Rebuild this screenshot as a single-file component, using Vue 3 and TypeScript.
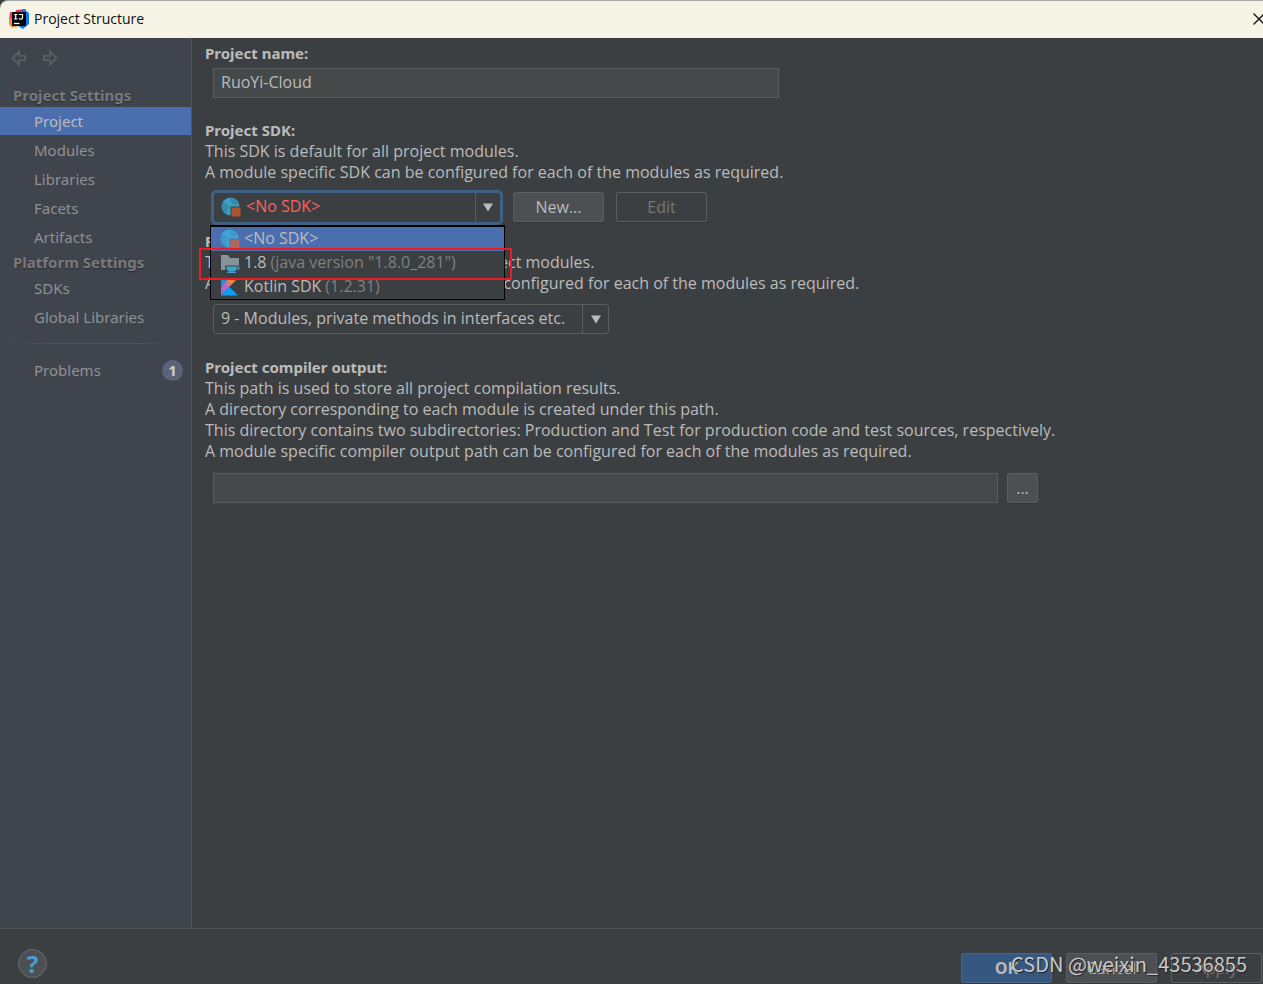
<script setup lang="ts">
import { ref } from 'vue'

interface SdkOption {
  id: string
  name: string
  version: string
  icon: 'globe' | 'folder' | 'kotlin'
}

const projectItems: string[] = ['Project', 'Modules', 'Libraries', 'Facets', 'Artifacts']
const platformItems: string[] = ['SDKs', 'Global Libraries']
const activeItem = ref('Project')

const projectName = ref('RuoYi-Cloud')
const outputPath = ref('')
const sdk = ref('none')
const level = ref('9')
const highlighted = ref('none')

const sdkOptions: SdkOption[] = [
  { id: 'none', name: '<No SDK>', version: '', icon: 'globe' },
  { id: '1.8', name: '1.8', version: '(java version "1.8.0_281")', icon: 'folder' },
  { id: 'kotlin', name: 'Kotlin SDK', version: '(1.2.31)', icon: 'kotlin' },
]
</script>

<template>
  <div class="window">
    <header class="titlebar">
      <svg class="app-logo" viewBox="0 0 20 20" aria-hidden="true">
        <path d="M1 3 6 5 7 1 17 0 14 9 5 11Z" fill="#e8305f" />
        <path d="M1 3 4 4 4 12 0 10Z" fill="#f0465a" />
        <path d="M0 10 4 9 6 17 3 19 0 15Z" fill="#fb8a2e" />
        <path d="M12 2 15 0 20 4 20 15 14 20 9 17Z" fill="#0f7df2" />
        <path d="M3 16 7 15 8 19 4 18Z" fill="#f7a23b" />
        <rect x="3" y="3" width="14" height="14" fill="#050505" />
        <path d="M5 5.5h3.4M5 10h3.4M6.7 5.500v4.500M10 5.500h3.500v3.300q0 1.300-1.600 1.300-1.200 0-1.900-.7" fill="none" stroke="#fff" stroke-width="1.200" />
        <path d="M5 14.500h5.500" stroke="#fff" stroke-width="1.300" />
      </svg>
      <h1 class="title">Project Structure</h1>
      <button class="close" type="button" aria-label="Close">
        <svg viewBox="0 0 12 12" aria-hidden="true"><path d="M.5.5l11 11M11.500.5l-11 11" stroke="#111" stroke-width="1.300" /></svg>
      </button>
    </header>

    <div class="body">
      <nav class="sidebar" aria-label="Settings">
        <div class="history">
          <button type="button" aria-label="Back" disabled>
            <svg viewBox="0 0 18 18" aria-hidden="true"><path d="M9 2.500 2.500 9 9 15.500V11.200h6V6.800H9Z" fill="none" stroke="#5d5f62" stroke-width="1.800" /></svg>
          </button>
          <button type="button" aria-label="Forward" disabled>
            <svg viewBox="0 0 18 18" aria-hidden="true"><path d="M9 2.500 15.500 9 9 15.500V11.200H3V6.800h6Z" fill="none" stroke="#5d5f62" stroke-width="1.800" /></svg>
          </button>
        </div>
        <h2 class="group">Project Settings</h2>
        <ul class="items">
          <li v-for="item in projectItems" :key="item">
            <button type="button" class="item" :class="{ active: item === activeItem }" @click="activeItem = item">{{ item }}</button>
          </li>
        </ul>
        <h2 class="group">Platform Settings</h2>
        <ul class="items">
          <li v-for="item in platformItems" :key="item">
            <button type="button" class="item" :class="{ active: item === activeItem }" @click="activeItem = item">{{ item }}</button>
          </li>
        </ul>
        <hr class="divider" />
        <button type="button" class="item problems" @click="activeItem = 'Problems'">
          <span>Problems</span><span class="count">1</span>
        </button>
      </nav>

      <main class="content">
        <section class="block">
          <label class="heading" for="project-name">Project name:</label>
          <input id="project-name" v-model="projectName" class="field name-field" type="text" />
        </section>

        <section class="block">
          <label class="heading" for="project-sdk">Project SDK:</label>
          <p>This SDK is default for all project modules.</p>
          <p>A module specific SDK can be configured for each of the modules as required.</p>
          <div class="sdk-row">
            <div class="combo focused">
              <svg class="sdk-icon" viewBox="0 0 20 20" aria-hidden="true">
                <circle cx="9.500" cy="9.500" r="9" fill="#3d9fc4" />
                <path d="M2 5 6 7 8 10 6 13 7 17 3 15 0 10ZM9 1 15 3 17 7 13 8 10 5Z" fill="#2f7f9f" opacity=".6" />
                <rect x="9.500" y="9.500" width="10.500" height="10.500" fill="#3c3f41" />
                <rect x="10.500" y="10.500" width="9" height="9" fill="#a9552f" />
              </svg>
              <select id="project-sdk" v-model="sdk" class="missing">
                <option v-for="o in sdkOptions" :key="o.id" :value="o.id">{{ o.name }}</option>
              </select>
              <span class="arrow"><svg viewBox="0 0 10 9" aria-hidden="true"><path d="M0 .5h10L5 8.500Z" fill="#bbb" /></svg></span>

              <ul class="popup" role="listbox" aria-label="Project SDK">
                <li
                  v-for="o in sdkOptions"
                  :key="o.id"
                  role="option"
                  :aria-selected="o.id === sdk"
                  :class="{ selected: o.id === highlighted, marked: o.id === '1.8' }"
                  @mouseenter="highlighted = o.id"
                  @click="sdk = o.id"
                >
                  <svg v-if="o.icon === 'globe'" class="sdk-icon" viewBox="0 0 20 20" aria-hidden="true">
                    <circle cx="9.500" cy="9.500" r="9" fill="#3ea6d8" />
                    <path d="M2 5 6 7 8 10 6 13 7 17 3 15 0 10ZM9 1 15 3 17 7 13 8 10 5Z" fill="#3d8dc0" opacity=".6" />
                    <rect x="9.500" y="9.500" width="10.500" height="10.500" fill="#4b6eaf" />
                    <rect x="10.500" y="10.500" width="9" height="9" fill="#b0685c" />
                  </svg>
                  <svg v-else-if="o.icon === 'folder'" class="sdk-icon" viewBox="0 0 20 20" aria-hidden="true">
                    <path d="M1 2h7l2 3h9v12H1Z" fill="#87939a" />
                    <path d="M5 12.500H20V20H8Q5 18 5 12.500Z" fill="#3c3f41" />
                    <path d="M6 13.500h13.500v3.300h-3.200q-1 1.700-3.300 1.700h-3q-3.500-.8-4-5Z" fill="#40a4c8" />
                    <path d="M16.500 14.500h2v1.200h-2Z" fill="#3c3f41" />
                    <path d="M7 19.300h9" stroke="#40a4c8" stroke-width="1.400" />
                  </svg>
                  <svg v-else class="sdk-icon" viewBox="0 0 20 20" aria-hidden="true">
                    <defs>
                      <linearGradient id="kt-warm" x1="0" y1="1" x2="1" y2="0">
                        <stop offset="0" stop-color="#7f6df0" />
                        <stop offset=".45" stop-color="#c169bd" />
                        <stop offset=".7" stop-color="#f28a3c" />
                        <stop offset="1" stop-color="#f98b1e" />
                      </linearGradient>
                    </defs>
                    <path d="M1 1h8L1 10Z" fill="#1596e8" />
                    <path d="M9 1h9L1 18.500V10Z" fill="url(#kt-warm)" />
                    <path d="M1 18.500 9.500 10 18 18.500Z" fill="#0ba0f4" />
                  </svg>
                  <span class="sdk-name">{{ o.name }}</span>
                  <span v-if="o.version" class="sdk-version">{{ o.version }}</span>
                </li>
              </ul>
            </div>
            <button class="btn" type="button">New...</button>
            <button class="btn" type="button" disabled>Edit</button>
          </div>
        </section>

        <section class="block level">
          <label class="heading" for="language-level">Project language level:</label>
          <p>This language level is default for all project modules.</p>
          <p>A module specific language level can be configured for each of the modules as required.</p>
          <div class="combo level-combo">
            <select id="language-level" v-model="level">
              <option value="9">9 - Modules, private methods in interfaces etc.</option>
            </select>
            <span class="arrow"><svg viewBox="0 0 10 9" aria-hidden="true"><path d="M0 .5h10L5 8.500Z" fill="#bbb" /></svg></span>
          </div>
        </section>

        <section class="block">
          <label class="heading" for="output-path">Project compiler output:</label>
          <p>This path is used to store all project compilation results.</p>
          <p>A directory corresponding to each module is created under this path.</p>
          <p>This directory contains two subdirectories: Production and Test for production code and test sources, respectively.</p>
          <p>A module specific compiler output path can be configured for each of the modules as required.</p>
          <div class="output-row">
            <input id="output-path" v-model="outputPath" class="field" type="text" />
            <button class="btn browse" type="button" aria-label="Browse">...</button>
          </div>
        </section>
      </main>
    </div>

    <footer class="footer">
      <button class="help" type="button" aria-label="Help">?</button>
      <div class="actions">
        <button class="btn primary" type="button">OK</button>
        <button class="btn" type="button">Cancel</button>
        <button class="btn" type="button" disabled>Apply</button>
      </div>
      <span class="watermark">CSDN @weixin_43536855</span>
    </footer>
  </div>
</template>

<style>
body {
  margin: 0;
  background: #3c3f41;
}
</style>

<style scoped>
.window {
  display: flex;
  flex-direction: column;
  min-height: 100vh;
  box-sizing: border-box;
  overflow: hidden;
  background: #3c3f41;
  color: #bbb;
  font: 16px/21px "Open Sans", "Noto Sans", sans-serif;
}
.window * {
  box-sizing: border-box;
}
button, input, select {
  margin: 0;
  font: inherit;
  color: inherit;
}
p, h1, h2, ul {
  margin: 0;
  padding: 0;
}
ul {
  list-style: none;
}
svg {
  display: block;
}

.titlebar {
  display: flex;
  align-items: center;
  height: 38px;
  padding: 0 0 1px 9px;
  border-top: 1px solid #aaa9a8;
  border-top-left-radius: 8px;
  background: #f5f4e6;
  color: #111;
}
.app-logo {
  width: 20px;
  height: 20px;
}
.title {
  margin-left: 5px;
  font: 400 14px/20px "Open Sans", "Noto Sans", sans-serif;
}
.close {
  width: 12px;
  height: 12px;
  margin-left: auto;
  margin-right: -2px;
  padding: 0;
  border: 0;
  background: none;
}

.body {
  display: flex;
  flex: 1;
}
.sidebar {
  flex: 0 0 192px;
  border-right: 1px solid #515456;
  background: #40444d;
  color: #8f9193;
  font-family: "Noto Sans", "Open Sans", sans-serif;
}
.history {
  display: flex;
  gap: 13px;
  padding: 11px 10px 0;
  height: 47px;
}
.history button {
  width: 18px;
  height: 18px;
  padding: 0;
  border: 0;
  background: none;
}
.group {
  height: 22px;
  padding-left: 13px;
  font-size: 15px;
  font-weight: 700;
  line-height: 20px;
  color: #787a7b;
  text-shadow: 0 1px 1px #2b2d33;
}
.items {
  display: grid;
  gap: 1px;
  padding-bottom: 1px;
}
.item {
  display: block;
  width: 100%;
  height: 28px;
  padding: 0 0 0 34px;
  border: 0;
  background: none;
  font-size: 15px;
  line-height: 28px;
  text-align: left;
}
.item.active {
  background: #4b6eaf;
  color: #bbb;
}
.divider {
  height: 1px;
  margin: 11px 10px 12px;
  border: 0;
  background: linear-gradient(90deg, transparent, #515457 30%, #515457 70%, transparent);
}
.problems {
  display: flex;
  align-items: center;
  justify-content: space-between;
  padding-right: 8px;
}
.count {
  width: 21px;
  height: 21px;
  border-radius: 50%;
  background: #5c6378;
  color: #ccc;
  font-weight: 700;
  line-height: 21px;
  text-align: center;
}

.content {
  flex: 1;
  min-width: 0;
  padding: 5px 24px 24px 13px;
}
.block {
  padding-bottom: 22px;
}
.block.level {
  padding-bottom: 23px;
}
.heading {
  display: block;
  font-size: 15px;
  font-weight: 700;
  font-family: "Noto Sans", "Open Sans", sans-serif;
}
.field {
  display: block;
  height: 30px;
  padding: 0 7px 2px;
  border: 1px solid #5a5d5e;
  background: #45494a;
}
.name-field {
  width: 100%;
  max-width: 566px;
  margin: 4px 0 0 8px;
}
.sdk-row {
  display: flex;
  align-items: center;
  gap: 12px;
  height: 36px;
  margin: 6px 0 0 6px;
}
.block:has(.sdk-row) {
  padding-bottom: 6px;
}
.combo {
  position: relative;
  display: flex;
  align-items: center;
  height: 30px;
  border: 1px solid #5a5d5e;
  border-radius: 3px;
}
.combo select {
  flex: 1;
  min-width: 0;
  height: 28px;
  padding: 0 7px 2px;
  border: 0;
  background: transparent;
  appearance: none;
  outline: none;
}
.combo.focused {
  width: 292px;
  height: 35px;
  margin-right: -2px;
  padding-left: 7px;
  border: 3px solid #3d6185;
  border-radius: 5px;
}
.combo select.missing {
  padding-left: 5px;
  color: #ff5f5f;
}
.combo option {
  background: #3c3f41;
  color: #bbb;
}
.arrow {
  display: flex;
  align-items: center;
  justify-content: center;
  align-self: stretch;
  width: 26px;
  border-left: 1px solid #5a5d5e;
  pointer-events: none;
}
.focused .arrow {
  width: 25px;
}
.arrow svg {
  width: 10px;
  height: 9px;
}
.sdk-icon {
  flex: none;
  width: 20px;
  height: 20px;
}
.popup {
  position: absolute;
  z-index: 2;
  top: 32px;
  left: -4px;
  width: 295px;
  border: 1px solid #000;
  border-top-width: 2px;
  background: #3c3f41;
}
.popup li {
  position: relative;
  display: flex;
  align-items: center;
  gap: 4px;
  height: 24px;
  padding-left: 9px;
}
.popup li.selected {
  background: #4b6eaf;
}
.popup li.marked::after {
  content: "";
  position: absolute;
  z-index: 1;
  inset: -3px -8px -5px -12px;
  border: 2px solid #ed1c24;
}
.sdk-version {
  color: #7f8182;
}
.btn {
  width: 91px;
  height: 30px;
  padding: 0;
  border: 1px solid #5a5e60;
  border-radius: 2px;
  background: #4c5052;
  line-height: 28px;
  box-shadow: 0 1px 1px #333638;
}
.btn:disabled {
  background: transparent;
  color: #777;
}
.level-combo {
  width: 396px;
  margin: 10px 0 0 8px;
}
.output-row {
  display: flex;
  gap: 9px;
  max-width: 825px;
  margin: 11px 0 0 8px;
}
.output-row .field {
  flex: 1;
  min-width: 0;
}
.btn.browse {
  width: 31px;
}

.footer {
  position: relative;
  display: flex;
  justify-content: space-between;
  height: 56px;
  padding: 0 1px 0 18px;
  border-top: 1px solid #515456;
}
.help {
  width: 29px;
  height: 29px;
  margin-top: 20px;
  padding: 0;
  border: 1px solid #6a6d6f;
  border-radius: 50%;
  background: #4c5052;
  color: #4a9fd0;
  font-family: "Noto Sans", sans-serif;
  font-size: 24px;
  font-weight: 700;
  line-height: 24px;
}
.actions {
  display: flex;
  gap: 14px;
  margin-top: 24px;
}
.btn.primary {
  border-color: #43698f;
  background: #365880;
  font-weight: 700;
}
.watermark {
  position: absolute;
  right: 16px;
  top: 22px;
  color: #c8c9ca;
  font: 20px/26px "Noto Sans CJK SC", sans-serif;
  text-shadow: 1px 1px 1px #222;
  pointer-events: none;
}
</style>
